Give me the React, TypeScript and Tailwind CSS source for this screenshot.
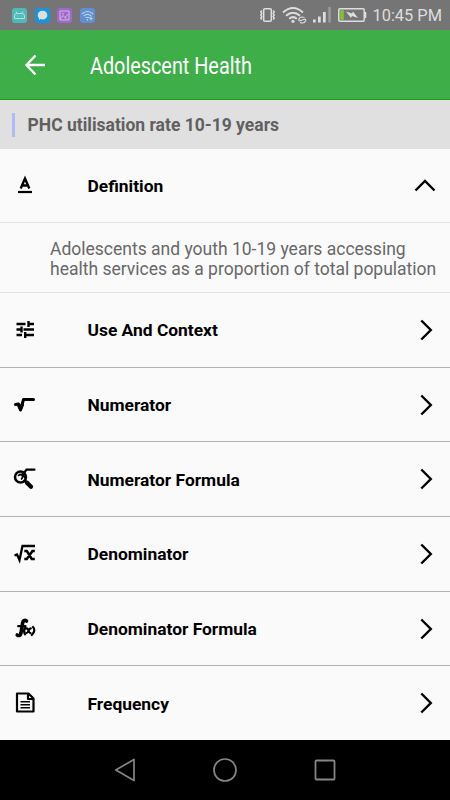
import { useState } from 'react';
import type { ReactNode } from 'react';

interface Section {
  name: string;
  icon: ReactNode;
}

const sections: Section[] = [
  {
    name: 'Use And Context',
    icon: (
      <svg width="24" height="24" viewBox="0 0 24 24" fill="none" stroke="black" strokeWidth="2.4">
        <path d="M3.5 6h9M15 6h6M15.5 3v6M3.5 11.5h4M10.5 11.5H21M8.5 8.5v6M3.5 17h5.5M12 17h9M12.2 14v6" />
      </svg>
    ),
  },
  {
    name: 'Numerator',
    icon: (
      <svg width="24" height="24" viewBox="0 0 24 24" fill="none" stroke="black" strokeWidth="3" strokeLinejoin="round" strokeLinecap="round">
        <path d="M2.5 11.5l3-.5 2 6 3-10.5H20.5" />
        <path d="M5.5 12.5l2 3.5 2-4" />
      </svg>
    ),
  },
  {
    name: 'Numerator Formula',
    icon: (
      <svg width="24" height="24" viewBox="0 0 24 24" fill="none" stroke="black" strokeLinecap="round">
        <path d="M11 6l2.5-3.3H21.5" strokeWidth="2.2" />
        <circle cx="7.5" cy="10" r="5.5" strokeWidth="2.5" />
        <path d="M5.5 8.5q2-2 4 0 .5 2-1 3.5M9.5 6.5l3 5" strokeWidth="1.7" />
        <path d="M12 14l2 2" strokeWidth="3" />
        <path d="M14 15.7l4 4" strokeWidth="4.2" />
      </svg>
    ),
  },
  {
    name: 'Denominator',
    icon: (
      <svg width="24" height="24" viewBox="0 0 24 24" fill="none" stroke="black">
        <path d="M1.5 13.5l2.5-1 2.5 5.5 3-14H22" strokeWidth="2.3" />
        <path d="M11.3 9h2.5l5 8h3M21.8 9h-2.3l-5.7 8h-2.5" strokeWidth="2.5" />
      </svg>
    ),
  },
  {
    name: 'Denominator Formula',
    icon: (
      <svg width="24" height="24" viewBox="0 0 24 24" fill="none" stroke="black" strokeLinecap="round" strokeLinejoin="round">
        <path d="M13.5 4c-2-1.3-3.3-.3-3.9 2L8 16c-.5 2.3-2 3.2-3.8 2" strokeWidth="3.6" />
        <path d="M5.2 9.2h7.3" strokeWidth="2.2" />
        <path d="M12.2 10.5c-1.3 2-1.3 4.7-.2 6.8M20 10c2 2 1.8 5-1.2 8" strokeWidth="2.3" />
        <path d="M13.5 11.5c2-.8 2 5 4 4.5M17.8 11.3c-2-.3-2.6 5-4.3 4.7" strokeWidth="2.2" />
      </svg>
    ),
  },
  {
    name: 'Frequency',
    icon: (
      <svg width="24" height="24" viewBox="0 0 24 24" fill="none" stroke="black" strokeWidth="2.2" strokeLinejoin="round">
        <path d="M4 2.5h11.500l5 5v13H4z" />
        <path d="M15 2.5V8h5.500" />
        <path d="M7.5 10.7h9.500M7.5 13.7h9.500M7.5 16.7h9.500" strokeWidth="1.6" />
      </svg>
    ),
  },
];

function StatusBar() {
  return (
    <div className="flex h-[30px] items-center bg-[#757575] pr-2 pl-3 text-[#dedede]">
      <div className="flex gap-[7.5px]">
        <svg width="15" height="15" viewBox="0 0 15 15">
          <rect width="15" height="15" rx="3" fill="#4fb9b7" />
          <path d="M2.5 10.5V8q0-2.5 2.5-2.5h5q2.5 0 2.5 2.5v2.5zM4 3.5l1.3 2M11 3.5L9.7 5.5M5 8h.7M9.3 8h.7" fill="none" stroke="#b9dfde" strokeWidth="1" />
        </svg>
        <svg width="15" height="15" viewBox="0 0 15 15">
          <rect width="15" height="15" rx="3" fill="#1595dd" />
          <path d="M7.5 2.8c3 0 4.8 2 4.8 4.4s-2 4.2-4.8 4.2c-.7 0-1.3 0-2-.3l-1.7 1 .2-2C3.1 9.2 2.8 8.3 2.8 7.2c0-2.5 1.7-4.4 4.7-4.4z" fill="#dedede" />
        </svg>
        <svg width="15" height="15" viewBox="0 0 15 15">
          <rect width="15" height="15" rx="3" fill="#a068c8" />
          <path d="M3 3h9v9H3zM3 11l3-3.5 2 2L11.5 6M5 5l2 1.5M9 11l-1-2" fill="none" stroke="#d2b9df" />
        </svg>
        <svg width="15" height="15" viewBox="0 0 15 15" fill="none" stroke="#c3d3e8" strokeWidth="1.1">
          <rect width="15" height="15" rx="3" fill="#5e90d2" stroke="none" />
          <path d="M2 6q5.500-5 11 0M3.800 8q3.700-3.300 7.400 0M5.700 9.900q1.800-1.400 3.600 0M7.500 11v1.500M11 8.500v4M9.500 10.500h3" />
        </svg>
      </div>
      <div className="ml-auto flex items-center">
        <svg width="17" height="16" viewBox="0 0 17 16" fill="none" stroke="currentColor">
          <rect x="4.7" y="1.7" width="7.6" height="12.6" rx="1" strokeWidth="1.5" />
          <path d="M2.8 3.5l-1 1.5 1 1.5-1 1.5 1 1.5-1 1.5 1 1.5M14.2 3.5l1 1.5-1 1.5 1 1.5-1 1.5 1 1.5-1 1.5" strokeWidth="1.5" />
        </svg>
        <svg className="ml-[6px]" width="25" height="18" viewBox="0 0 25 18" fill="none" stroke="currentColor" strokeWidth="2">
          <path d="M1 6.5Q11 -2.5 21 6.5M4 9.8Q11 3.7 18 9.8M7.2 12.8Q11 9.5 14.8 12.8" />
          <circle cx="11" cy="15.3" r="1.6" fill="currentColor" stroke="none" />
          <path d="M22.5 11.5q-4-1.5-5.5 1.5-.8 2 1.200 2M18 16.500q4 1.500 5.500-1.500.8-2-1.200-2M18 14.800l4.500-1.600" strokeWidth="1.2" />
        </svg>
        <svg className="ml-[6px]" width="18" height="16" viewBox="0 0 18 16" fill="currentColor">
          <rect x="0" y="12.5" width="2.7" height="3" />
          <rect x="5" y="9.5" width="2.7" height="6" />
          <rect x="10" y="5" width="2.7" height="10.5" />
          <rect x="15.3" y="0" width="2.5" height="15.5" fill="#9b9b9b" />
        </svg>
        <svg className="ml-[7px]" width="29" height="14" viewBox="0 0 29 14">
          <rect x=".8" y=".8" width="25.4" height="12.4" rx="1" fill="none" stroke="currentColor" strokeWidth="1.5" />
          <rect x="26.5" y="4" width="1.8" height="6" fill="currentColor" />
          <rect x="2.3" y="2.2" width="3.5" height="9.6" fill="#82c52c" />
          <path d="M8 3.5l6 2 1-2 5 6.500-6-2-1 2z" fill="currentColor" />
        </svg>
        <span className="ml-[5px] pt-[2px] text-[16.4px] leading-6 whitespace-nowrap">10:45 PM</span>
      </div>
    </div>
  );
}

function NavBar() {
  return (
    <div className="flex h-[60px] items-center justify-between bg-black px-[113px]">
      <svg width="24" height="26" viewBox="0 0 24 26" fill="none" stroke="#858585" strokeWidth="1.7" strokeLinejoin="round">
        <path d="M2.8 13L21 2.5v21z" />
      </svg>
      <svg width="26" height="26" viewBox="0 0 26 26" fill="none" stroke="#858585" strokeWidth="1.7">
        <circle cx="13" cy="13" r="11" />
      </svg>
      <svg width="24" height="24" viewBox="0 0 24 24" fill="none" stroke="#858585" strokeWidth="1.8">
        <rect x="2.5" y="2.5" width="19" height="19" rx="1" />
      </svg>
    </div>
  );
}

export default function App() {
  const [open, setOpen] = useState(true);

  return (
    <div className="flex h-[800px] w-[450px] flex-col overflow-hidden bg-[#fafafa] font-[Roboto,sans-serif]">
      <StatusBar />

      <header className="flex h-[70px] items-center border-b border-[#189b20] bg-[#3eae49] pl-[24px] text-white">
        <button aria-label="Back">
          <svg width="22" height="22" viewBox="0 0 22 22" fill="none" stroke="currentColor" strokeWidth="2.4">
            <path d="M11.5 1.5L2.5 11l9 9.5M2.5 11H21" />
          </svg>
        </button>
        <h1 className="ml-[44px] origin-left scale-x-[0.855] pt-[2px] text-[23.2px] leading-[28px] whitespace-nowrap">
          Adolescent Health
        </h1>
      </header>

      <div className="flex h-[49px] items-center bg-[#e0e0e0] pl-3">
        <div className="h-6 w-[3px] bg-[#afbbf4]" />
        <h2 className="ml-[12.5px] pt-px text-[17.5px] leading-6 font-bold text-[#606060]">
          PHC utilisation rate 10-19 years
        </h2>
      </div>

      <button
        className="flex h-[74px] w-full items-center border-b border-[#e4e4e4] pr-[14px] pl-[13px] text-left"
        onClick={() => setOpen(!open)}
      >
        <svg width="24" height="24" viewBox="0 0 24 24" fill="none" stroke="black">
          <path d="M7.7 14.5L12 4.500l4.300 10M9 11.500h6" strokeWidth="2.4" />
          <path d="M5 18h14" strokeWidth="2.2" />
        </svg>
        <span className="ml-[50.5px] flex-1 text-[17.4px] leading-6 font-bold">Definition</span>
        <svg className={open ? '' : 'rotate-180'} width="22" height="14" viewBox="0 0 22 14" fill="none" stroke="black" strokeWidth="2.4">
          <path d="M1.5 11.5L11 2l9.500 9.500" />
        </svg>
      </button>
      {open && (
        <p className="h-[70px] border-b border-[#e4e4e4] pt-[15.5px] pl-[50px] text-[17.5px] leading-[20.5px] whitespace-nowrap text-[#686868]">
          Adolescents and youth 10-19 years accessing
          <br />
          health services as a proportion of total population
        </p>
      )}

      <div className="flex flex-1 flex-col divide-y divide-[#b2b2b2]">
        {sections.map((section) => (
          <button key={section.name} className="flex min-h-0 flex-1 items-center pr-[17px] pl-[13px] text-left">
            {section.icon}
            <span className="ml-[50.5px] flex-1 pt-px text-[17.4px] leading-6 font-bold">{section.name}</span>
            <svg width="14" height="22" viewBox="0 0 14 22" fill="none" stroke="black" strokeWidth="2.4">
              <path d="M2.3 1.5L11.800 11l-9.500 9.500" />
            </svg>
          </button>
        ))}
      </div>

      <NavBar />
    </div>
  );
}
